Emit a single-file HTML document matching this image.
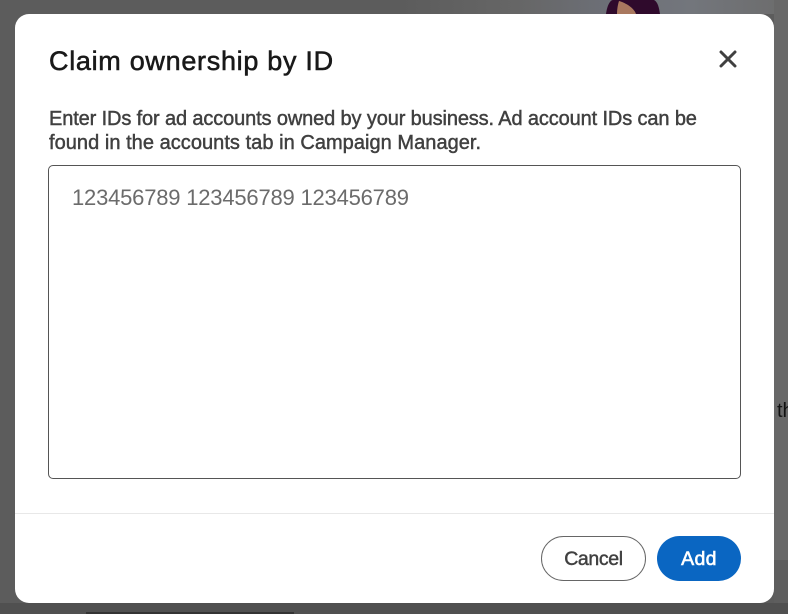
<!DOCTYPE html>
<html lang="en">
<head>
<meta charset="utf-8">
<title>Claim ownership by ID</title>
<style>
html,body{margin:0;padding:0;width:788px;height:614px;overflow:hidden;background:#5c5c5c;font-family:"Liberation Sans",sans-serif}
.bg{position:absolute;left:0;top:0;width:788px;height:614px}
.modal{position:absolute;left:15px;top:14px;width:759px;height:589px;background:#fff;border-radius:14px}
.abs{position:absolute;white-space:nowrap;margin:0}
.title{left:34px;top:29px;font-size:27px;line-height:36px;font-weight:400;color:#191919;letter-spacing:.7px;-webkit-text-stroke:.55px #191919}
.desc{left:34px;font-size:20px;line-height:24px;color:#404040;-webkit-text-stroke:.45px #404040}
.d1{top:93px;letter-spacing:-.13px}
.d2{top:117px;letter-spacing:.04px}
.ta{position:absolute;left:33px;top:151px;width:691px;height:312px;border:1px solid #555;border-radius:5px}
.ph{left:57px;top:169px;font-size:22px;line-height:29px;color:#6b6b6b;letter-spacing:-.2px}
.rule{position:absolute;left:0;top:499px;width:759px;height:1px;background:#e8e8e8}
.btn{position:absolute;top:522px;height:45px;border-radius:23px;box-sizing:border-box;font-size:19.5px;line-height:47px;text-align:center}
.cancel{left:526px;width:105px;border:1px solid #666;line-height:45px;color:#404040;letter-spacing:-.35px;-webkit-text-stroke:.45px #404040}
.add{left:642px;width:84px;background:#0a66c2;color:#fff;letter-spacing:.35px;-webkit-text-stroke:.6px #fff}
</style>
</head>
<body>
<svg class="bg" viewBox="0 0 788 614" xmlns="http://www.w3.org/2000/svg">
<defs>
<linearGradient id="t" x1="0" x2="1" y1="0" y2="0">
<stop offset="0" stop-color="#5c5c5c"/>
<stop offset=".3" stop-color="#666"/>
<stop offset=".55" stop-color="#6d7078"/>
<stop offset=".75" stop-color="#73767c"/>
<stop offset="1" stop-color="#6c6c6c"/>
</linearGradient>
</defs>
<rect width="788" height="614" fill="#5c5c5c"/>
<rect x="400" y="0" width="388" height="14" fill="url(#t)"/>
<rect x="774" y="0" width="14" height="614" fill="#686868"/>
<rect x="774" y="560" width="14" height="54" fill="#5e5e5e"/>
<rect x="0" y="603" width="788" height="11" fill="#505050"/>
<path d="M606 14C607 6 610 0 613 0H654C658 2 659 8 660 14Z" fill="#2f0a2c"/>
<path d="M617 14C617 9 618 4 619 1C626 3 634 8 636 14Z" fill="#a9785f"/>
<rect x="86" y="612" width="208" height="2" fill="#333"/>
</svg>
<div class="abs" style="left:777px;top:398px;font-size:20px;line-height:26px;color:#111">th</div>
<div class="modal">
<h2 class="abs title">Claim ownership by ID</h2>
<svg class="abs" style="left:704px;top:36px" width="18" height="18" viewBox="0 0 18 18" xmlns="http://www.w3.org/2000/svg"><path d="M2 2L16 16M16 2L2 16" stroke="#404040" stroke-width="3" stroke-linecap="round" fill="none"/></svg>
<div class="abs desc d1">Enter IDs for ad accounts owned by your business. Ad account IDs can be</div>
<div class="abs desc d2">found in the accounts tab in Campaign Manager.</div>
<div class="ta"></div>
<div class="abs ph">123456789 123456789 123456789</div>
<div class="rule"></div>
<div class="btn cancel">Cancel</div>
<div class="btn add">Add</div>
</div>
</body>
</html>
